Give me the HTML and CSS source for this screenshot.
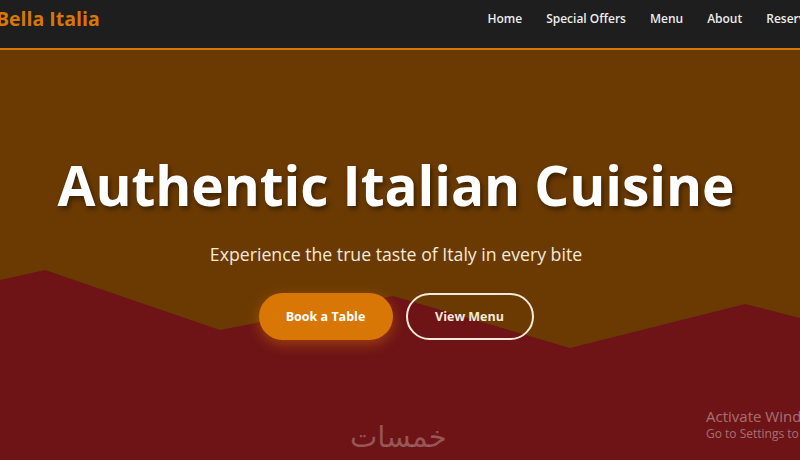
FILE: index.html
```html
<!DOCTYPE html>
<html lang="en">
<head>
<meta charset="utf-8">
<title>Bella Italia</title>
<link rel="stylesheet" href="styles.css">
</head>
<body>
<header class="navbar">
  <div class="logo">Bella Italia</div>
  <nav class="nav-links">
    <a href="#">Home</a>
    <a href="#">Special Offers</a>
    <a href="#">Menu</a>
    <a href="#">About</a>
    <a href="#">Reservations</a>
  </nav>
</header>
<section class="hero">
  <svg class="mountains" viewBox="0 0 800 410" preserveAspectRatio="none" aria-hidden="true">
    <polygon points="0,230 45,220 220,280 393,246 570,298 745,254 800,268 800,410 0,410" fill="#6e1416"/>
  </svg>
  <div class="hero-content">
    <h1>Authentic Italian Cuisine</h1>
    <p class="subtitle">Experience the true taste of Italy in every bite</p>
    <div class="actions">
      <a class="btn btn-primary" href="#">Book a Table</a>
      <a class="btn btn-outline" href="#">View Menu</a>
    </div>
  </div>
  <div class="watermark" dir="rtl">خمسات</div>
  <div class="activate">
    <div class="act-title">Activate Windows</div>
    <div class="act-sub">Go to Settings to activate Windows.</div>
  </div>
</section>
</body>
</html>
```

FILE: styles.css
```css
* { box-sizing: border-box; }
html, body { margin: 0; padding: 0; }
body {
  width: 800px;
  height: 460px;
  overflow: hidden;
  font-family: "Open Sans", "Noto Sans", sans-serif;
  background: #6e1416;
}
.navbar {
  height: 50px;
  background: #1e1e1e;
  border-bottom: 2px solid #d97706;
  display: flex;
  align-items: center;
  padding-left: 0;
  white-space: nowrap;
}
.logo {
  color: #d97706;
  font-weight: 700;
  font-size: 19.5px;
  margin-left: -4px;
  margin-top: -12px;
}
.nav-links {
  display: flex;
  gap: 24px;
  margin-left: auto;
  margin-right: -41px;
  margin-top: -12px;
}
.nav-links a {
  color: #ececec;
  text-decoration: none;
  font-weight: 600;
  font-size: 12px;
}
.hero {
  position: relative;
  height: 410px;
  background: #6b3a03;
  overflow: hidden;
}
.mountains {
  position: absolute;
  inset: 0;
  width: 100%;
  height: 100%;
}
.hero-content {
  position: relative;
  display: flex;
  flex-direction: column;
  align-items: center;
  padding-top: 100px;
  margin-left: -8px;
}
h1 {
  margin: 0;
  color: #fff;
  font-weight: 700;
  font-size: 55px;
  line-height: 70px;
  letter-spacing: -0.1px;
  text-shadow: 2px 3px 5px rgba(0,0,0,0.45);
}
.subtitle {
  margin: 21px 0 0;
  color: #f3ead9;
  font-size: 17.7px;
  line-height: 26px;
}
.actions {
  display: flex;
  gap: 13px;
  margin-top: 26px;
}
.btn {
  display: flex;
  align-items: center;
  justify-content: center;
  height: 47px;
  border-radius: 24px;
  font-weight: 700;
  font-size: 12.5px;
  color: #fff;
  text-decoration: none;
}
.btn-primary {
  width: 134px;
  background: #d97706;
  box-shadow: 0 4px 14px rgba(217,119,6,0.45);
}
.btn-outline {
  width: 128px;
  border: 2px solid #f3ead9;
  color: #f3ead9;
}
.watermark {
  position: absolute;
  left: 350px;
  top: 370px;
  font-family: "DejaVu Sans", sans-serif;
  font-size: 29px;
  color: rgba(255,255,255,0.28);
}
.activate {
  position: absolute;
  left: 706px;
  top: 356px;
  white-space: nowrap;
  color: rgba(255,255,255,0.4);
}
.act-title { font-size: 15px; line-height: 20px; }
.act-sub { font-size: 12px; line-height: 16px; }
```
